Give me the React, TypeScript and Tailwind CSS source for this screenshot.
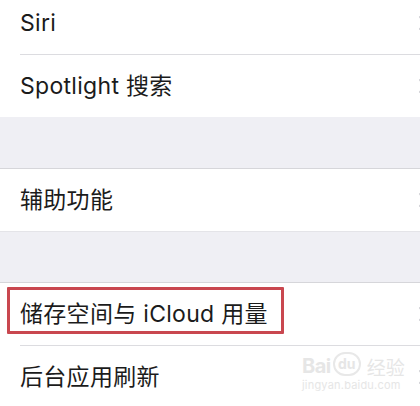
import type { ReactNode } from "react";

const FONT = { fontFamily: '"Inter", "Noto Sans CJK SC", sans-serif' };

function Chevron() {
  return (
    <svg
      className="absolute top-1/2 -translate-y-1/2 left-[418px]"
      width="10"
      height="16"
      viewBox="0 0 10 16"
      fill="none"
    >
      <path d="M2 2l6 6-6 6" stroke="#cfcfd4" strokeWidth="2" strokeLinecap="round" strokeLinejoin="round" />
    </svg>
  );
}

function Row({ children, sep }: { children: ReactNode; sep?: boolean }) {
  return (
    <div className="relative bg-white pl-5">
      <div className={sep ? "h-[63px] flex items-center border-t border-[#dcdce0]" : "h-[62px] flex items-center"}>
        <span className="text-[23px] text-[#1b1b1b] tracking-[0.3px]">{children}</span>
      </div>
      <Chevron />
    </div>
  );
}

export default function App() {
  return (
    <div className="relative w-[420px] h-[406px] overflow-hidden bg-white" style={FONT}>
      <div className="-mt-[8px]">
        <Row>Siri</Row>
        <Row sep>Spotlight 搜索</Row>
        <div className="h-[52px] bg-[#efeff4] border-b border-[#d6d6da]" />
        <div className="border-b border-[#e4e4e8]">
          <Row>辅助功能</Row>
        </div>
        <div className="h-[51px] bg-[#efeff4] border-b border-[#d6d6da]" />
        <Row>储存空间与 iCloud 用量</Row>
        <Row sep>后台应用刷新</Row>
      </div>

      {/* highlight box */}
      <div className="absolute left-[7px] top-[287px] w-[277px] h-[47px] border-[3px] border-[#c9474f] rounded-[1px]" />

      {/* watermark */}
      <div className="absolute left-[302px] top-[352px] text-[#e6e6e6] select-none">
        <div className="flex items-end gap-[2px] leading-none">
          <span className="text-[20px] font-bold tracking-[-0.5px]">Bai</span>
          <span className="flex items-center justify-center w-[28px] h-[24px] rounded-[12px] border-2 border-[#e8e8e8] text-[14px] font-bold">du</span>
          <span className="ml-[4px] text-[19px]" style={{ fontFamily: '"Noto Sans CJK SC", sans-serif' }}>经验</span>
        </div>
        <div className="mt-[4px] text-[11px] leading-none tracking-[0.2px]">jingyan.baidu.com</div>
      </div>
    </div>
  );
}
